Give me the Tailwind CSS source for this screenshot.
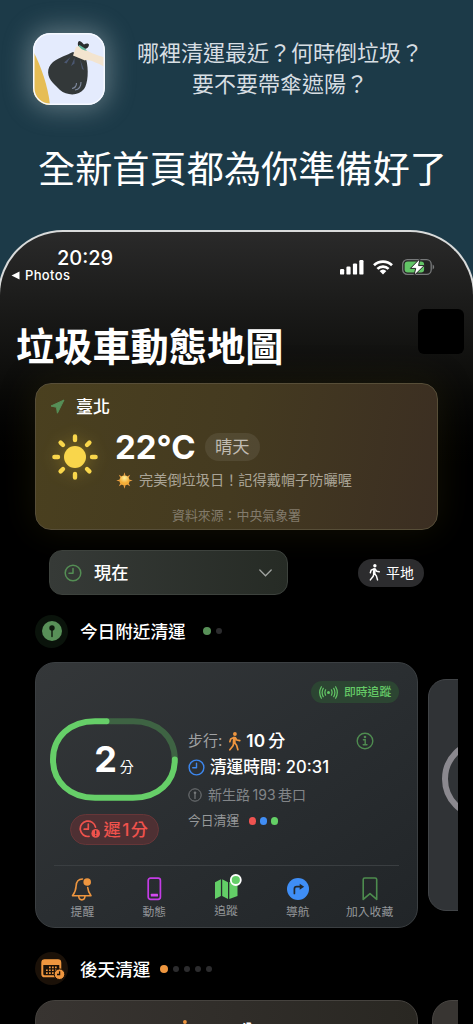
<!DOCTYPE html>
<html lang="zh-Hant">
<head>
<meta charset="utf-8">
<title>垃圾車動態地圖</title>
<script src="https://cdn.jsdelivr.net/npm/@tailwindcss/browser@4"></script>
</head>
<body class="bg-black">
<svg class="hidden">
  <symbol id="walk" viewBox="0 0 12 18"><circle cx="6.4" cy="1.9" r="1.8" fill="currentColor"/><g fill="none" stroke="currentColor" stroke-linecap="round" stroke-linejoin="round"><path stroke-width="2.8" d="M6 5.8 5.6 10"/><path stroke-width="1.6" d="M5.4 5.2 2.4 6.6 1.6 9.2M6.8 5.4 8.2 7.6 11 8.2M5.4 10.2 4.6 13 1.6 16.8M6 10 8 12.6 9.2 16.8"/></g></symbol>
  <symbol id="clock" viewBox="0 0 18 18"><g fill="none" stroke="currentColor" stroke-width="1.5" stroke-linecap="round" stroke-linejoin="round"><circle cx="9" cy="9" r="7.8"/><path d="M9 4.4V9.2H5"/></g></symbol>
</svg>
<main class="relative flex h-[1024px] w-[473px] flex-col overflow-hidden bg-[#1c3a48] font-['Inter','Noto_Sans_CJK_TC',sans-serif] text-white">
  <header class="h-[230px] shrink-0">
    <div class="flex h-[124px] items-start pl-[33px] pt-[33px]">
      <div class="size-[72px] shrink-0 overflow-hidden rounded-[17px] shadow-[0_0_26px_4px_rgba(225,235,235,0.34)]">
        <svg viewBox="0 0 72 72" class="size-full">
          <rect width="72" height="72" fill="#e4ebfd"/>
          <path d="M0 18C8 33 15 53 17 72H0Z" fill="#e6bd55"/>
          <path d="M46 15C44 11 45 8 46.5 8 49 8.500 50 11 51 11.500 53 10 56 10 56 12 55.500 15 53 16.500 50 16Z" fill="#292d2f"/>
          <path d="M40 19C34 22 27 24 20 29 13 35 14 44 20 50L27 57C34 63 46 63 51 56 55 51 56 36 53 26Z" fill="#333839"/>
          <path d="M37.500 24 31 29.500 33.500 30.500ZM41.500 25 38 33 41.500 30.500ZM47 26 49 36 51 37Z" fill="#4b5771"/>
          <path d="M43 14 46 13C54 18.500 63 22 72 24.500V34C62 29 55 26 52 27.500L40 22.500Z" fill="#f3e4cf"/>
          <path d="M45.500 12.500C47 15.500 50 17.500 54 17.800L52 15.500 46.500 12Z" fill="#5eb49a"/>
          <path d="M43.500 50C43.500 53 42 55 39 55.500M48 49C48 54 46 56.500 42 57" fill="none" stroke="#7d879b" stroke-width="1.2"/>
          <rect x=".75" y=".75" width="70.5" height="70.5" rx="16.3" fill="none" stroke="#f6f9ff" stroke-width="1.5"/>
        </svg>
      </div>
      <p class="ml-[25px] mt-[5px] w-[300px] text-center text-[22px] leading-[31px] text-[#d7dee3]">哪裡清運最近？何時倒垃圾？<br>要不要帶傘遮陽？</p>
    </div>
    <h1 class="pl-[12px] pt-[20px] text-center text-[37.2px] leading-[52px] whitespace-nowrap">全新首頁都為你準備好了</h1>
  </header>

  <section class="-mx-[2px] flex-1 rounded-t-[65px] border-2 border-b-0 border-[#d9dbdb] bg-black bg-linear-to-b from-[#2a2a2a] via-[#0d0d0b] via-[145px] to-black to-[300px]">
    <!-- status bar -->
    <div class="flex h-[56px] items-start justify-between pl-[11px] pr-[38px]">
      <div class="pt-[15px]">
        <div class="pl-[46px] text-[20px] leading-[22px] font-medium">20:29</div>
        <div class="flex items-center gap-[5px] text-[13px] leading-[13px] font-medium tracking-[0.35px]"><svg class="h-[9px] w-[9px]" viewBox="0 0 9 9"><path d="M.5 4.5 8.5.5V8.5Z" fill="#fff"/></svg>Photos</div>
      </div>
      <div class="flex h-[43px] items-center gap-[9px] pt-[27px]">
        <svg class="h-[15px] w-[24px]" viewBox="0 0 24 15" fill="#fff"><rect y="9" width="4.2" height="5.6" rx="1.2"/><rect x="6.4" y="6.5" width="4.2" height="8.1" rx="1.2"/><rect x="12.9" y="3.4" width="4.2" height="11.2" rx="1.2"/><rect x="19.3" width="4.2" height="14.6" rx="1.2"/></svg>
        <svg class="h-[15px] w-[20px]" viewBox="0 0 20 15"><g fill="none" stroke="#fff" stroke-width="2.7"><path d="M1 5.2A13 13 0 0 1 19 5.2M4.4 8.9A8 8 0 0 1 15.6 8.9"/></g><path d="M6.6 11.1A5 5 0 0 1 13.4 11.1L10 14.6Z" fill="#fff"/></svg>
        <svg class="h-[18px] w-[33px]" viewBox="0 0 33 18"><rect x=".7" y="1.7" width="28.5" height="14.6" rx="4.6" fill="none" stroke="#77797a" stroke-width="1.3"/><path d="M30.6 6.5C32.7 7.4 32.7 10.6 30.6 11.5Z" fill="#77797a"/><rect x="2.6" y="3.6" width="19.5" height="10.8" rx="3" fill="#62c466"/><path d="M18 .6 8.400 10.400H13.700L12 17.600 22.200 7.600H16.600Z" fill="#fff" stroke="#242424" stroke-width="1"/></svg>
      </div>
    </div>
    <div class="flex h-[95px] justify-between pl-[16px] pr-[9.5px] pt-[20.5px]">
      <h2 class="pt-[1px] text-[38.2px] leading-[74px] font-bold whitespace-nowrap">垃圾車動態地圖</h2>
      <div class="size-[45.5px] rounded-[6px] bg-black"></div>
    </div>

    <!-- weather -->
    <article class="ml-[35px] h-[147px] w-[403px] rounded-[16px] border border-[#574e38] bg-linear-100 from-[#4a401f] via-[#443a20] via-50% to-[#3b2e22] shadow-[0_0_36px_rgba(70,60,10,0.28)]">
      <div class="flex items-center gap-[11px] pl-[14px] pt-[10px]">
        <svg class="size-[15px]" viewBox="0 0 15 15"><path d="M14 1 7.4 14.2 6.5 8.3 1 7Z" fill="#568f57" stroke="#568f57" stroke-linejoin="round"/></svg>
        <span class="pt-[2px] text-[17px] leading-[22px] font-medium">臺北</span>
      </div>
      <div class="flex pl-[15px] pt-[12px]">
        <svg class="mt-[3px] size-[48px] shrink-0 drop-shadow-[0_0_7px_rgba(255,215,50,0.3)]" viewBox="-24 -24 48 48"><circle r="11" fill="#f9d64b"/><g stroke="#f9d64b" stroke-width="4.4" stroke-linecap="round"><path d="M0-20.6V-17M0 20.6V17M-20.6 0H-17M20.6 0H17M-14.4-14.4-12-12M14.4 14.4 12 12M-14.4 14.4-12 12M14.4-14.4 12-12"/></g></svg>
        <div class="pl-[16px]">
          <div class="flex items-center gap-[10px]">
            <span class="w-[80px] text-[33px] leading-[34px] font-bold whitespace-nowrap">22°C</span>
            <span class="h-[28px] rounded-full bg-white/8 px-[10px] text-[17.3px] leading-[27px] text-[#c0bbb1]">晴天</span>
          </div>
          <div class="flex items-center gap-[6px] pt-[5px] pl-[1px]">
            <svg class="size-[17px]" viewBox="-9 -9 18 18"><defs><radialGradient id="sg" cy=".25"><stop stop-color="#fff09a"/><stop offset="1" stop-color="#f5ae37"/></radialGradient></defs><path d="M0-8.7 1.1-5H-1.1ZM0 8.7 1.1 5H-1.1ZM-8.7 0-5 1.1V-1.1ZM8.7 0 5 1.1V-1.1ZM-6-6-2.7-4.3-4.3-2.7ZM6 6 2.7 4.3 4.3 2.7ZM-6 6-2.7 4.3-4.3 2.7ZM6-6 2.7-4.3 4.3-2.7Z" fill="#f0a044"/><circle r="5.4" fill="url(#sg)"/></svg>
            <span class="text-[14.2px] leading-[22px] whitespace-nowrap text-[#aaa496]">完美倒垃圾日！記得戴帽子防曬喔</span>
          </div>
        </div>
      </div>
      <p class="pt-[16px] text-center text-[12.9px] leading-[18px] text-[#827b6c]">資料來源：中央氣象署</p>
    </article>

    <!-- time filter -->
    <div class="flex items-center justify-between pl-[49px] pr-[49px] pt-[20px]">
      <div class="flex h-[45px] w-[239px] items-center rounded-[13px] border border-[#3d423d] bg-linear-to-r from-[#363a37] to-[#262b25] pr-[15px] pl-[14px]">
        <svg class="size-[18px] text-[#548e54]"><use href="#clock"/></svg>
        <span class="ml-[12px] flex-1 text-[17.3px] leading-[24px] font-medium">現在</span>
        <svg class="h-[8px] w-[13px]" viewBox="0 0 13 8"><path d="M.8 1 6.5 6.8 12.2 1" fill="none" stroke="#a1a4a1" stroke-width="1.3" stroke-linecap="round"/></svg>
      </div>
      <div class="flex h-[28px] w-[66px] items-center gap-[5px] rounded-full bg-[#2c2c2e] pl-[10px] text-[14px]"><svg class="h-[17px] w-[13px]"><use href="#walk"/></svg>平地</div>
    </div>

    <div class="flex h-[67px] items-center pl-[35px] pt-[5px]">
      <div class="flex size-[33px] items-center justify-center rounded-full bg-[#0a130b]"><svg class="size-[20px]" viewBox="0 0 20 20"><circle cx="10" cy="10" r="10" fill="#589058"/><circle cx="10" cy="7" r="2.7" fill="#0d180d"/><path d="M10 8V15.5" stroke="#0d180d" stroke-width="1.4" stroke-linecap="round"/></svg></div>
      <h3 class="ml-[12px] pt-[1px] text-[17.6px] leading-[25px] font-medium">今日附近清運</h3>
      <i class="ml-[17.5px] size-[8px] rounded-full bg-[#589058]"></i><i class="ml-[5px] size-[6px] rounded-full bg-[#2c2c2e]"></i>
    </div>

    <!-- nearby stop cards -->
    <div class="flex w-[457.5px] items-center gap-[9.5px] overflow-hidden pl-[35px]">
      <article class="h-[266px] w-[383px] shrink-0 rounded-[20px] border border-[#3b3f42] bg-linear-to-br from-[#343739] via-[#2a2e31] to-[#212528]">
        <div class="flex justify-end pr-[18px] pt-[18px]"><div class="flex h-[22px] w-[88px] items-center gap-[6px] rounded-full bg-[#2c4532] pl-[8px] text-[11.8px] font-medium text-[#64c866]">
          <svg class="h-[13px] w-[19px]" viewBox="0 0 19 13"><circle cx="9.5" cy="6.5" r="1.5" fill="currentColor"/><g fill="none" stroke="currentColor" stroke-width="1.2" stroke-linecap="round"><path d="M6.6 3.8Q5.2 6.5 6.6 9.2M12.4 3.8Q13.8 6.5 12.4 9.2M4.3 2.3Q1.9 6.5 4.3 10.7M14.7 2.3Q17.1 6.5 14.7 10.7M2.4.8Q-1 6.5 2.4 12.2M16.6.8Q20 6.5 16.6 12.2"/></g></svg><span class="pt-[2px] whitespace-nowrap">即時追蹤</span></div></div>
        <div class="flex h-[162px] pl-[14px] pt-[15px]">
          <div class="flex w-[128px] flex-col items-center">
            <div class="grid h-[83px] w-[128px] place-items-center">
              <svg class="col-start-1 row-start-1 h-[83px] w-[128px]" viewBox="0 0 128 83" fill="none" stroke-width="6" stroke-linecap="round"><path d="M56 3.200H83C108 3.200 124.800 19 124.800 41.500" stroke="#3e6343" stroke-linecap="butt"/><path d="M56.500 3.200H45C20 3.200 3 19 3 41.500S20 79.800 45 79.800H83C108 79.800 124.800 64 124.800 41.500" stroke="#66cf68"/></svg>
              <div class="col-start-1 row-start-1 flex items-baseline gap-[3px] pb-[1px]"><span class="text-[36px] leading-[44px] font-bold">2</span><span class="text-[14px] leading-[20px]">分</span></div>
            </div>
            <div class="mt-[13px] flex h-[31px] w-[89px] items-center gap-[3px] rounded-full border border-[#663638] bg-[#4e3033] pl-[8px] text-[17.2px] text-[#f0524c]">
              <svg class="h-[19px] w-[22px] shrink-0" viewBox="0 0 22 19" fill="none" stroke="currentColor" stroke-width="1.7" stroke-linecap="round" stroke-linejoin="round"><path d="M10 16.4A7.7 7.7 0 1 1 16.5 7.2M9.3 4.2V9.2H5.2"/><circle cx="16.7" cy="13.4" r="4.3" fill="currentColor" stroke="none"/><path d="M16.7 11V13.6M16.7 15.5V15.6" stroke="#4e3033" stroke-width="1.4"/></svg><span class="pt-[1px] font-medium whitespace-nowrap">遲<span class="px-[1.5px]">1</span>分</span></div>
          </div>
          <div class="flex-1 pl-[10px] pt-[10px] whitespace-nowrap">
            <div class="flex h-[26px] items-center text-[15px] text-[#a0a2a4]">步行:<svg class="ml-[6px] h-[19px] w-[13px] text-[#ee953f]"><use href="#walk"/></svg><b class="ml-[5px] text-[17.3px] font-semibold text-white">10<span class="ml-[3px] font-medium">分</span></b>
              <svg class="mr-[43px] ml-auto size-[18px]" viewBox="0 0 18 18" fill="none" stroke="#4f8c50" stroke-width="1.4" stroke-linecap="round"><circle cx="9" cy="9" r="7.8"/><path d="M7.4 7.7H9.2V12.6M7.2 12.7H11"/><circle cx="9" cy="5" r=".6" fill="#4f8c50"/></svg></div>
            <div class="flex h-[26px] items-center text-[16.6px] font-medium"><svg class="mr-[5px] size-[17px] text-[#3d87ee]"><use href="#clock"/></svg>清運時間: 20:31</div>
            <div class="flex h-[29px] items-center text-[14px] text-[#828588]"><svg class="mr-[6px] size-[14px]" viewBox="0 0 14 14" fill="none" stroke="#75787a"><circle cx="7" cy="7" r="6.2"/><path d="M7 5.5V10.5" stroke-linecap="round" stroke-width="1.2"/><circle cx="7" cy="4.8" r="1.3" fill="#75787a" stroke="none"/></svg>新生路<span class="px-[2.5px]">193</span>巷口</div>
            <div class="flex h-[24px] items-center gap-[3.5px] text-[12.8px] text-[#96989a]"><span class="mr-[6px]">今日清運</span><i class="size-[7.5px] rounded-full bg-[#ef5350]"></i><i class="size-[7.5px] rounded-full bg-[#418ef5]"></i><i class="size-[7.5px] rounded-full bg-[#64d066]"></i></div>
          </div>
        </div>
        <div class="mx-[18px] border-t border-[#3a3e41]"></div>
        <nav class="ml-[10.5px] grid w-[359px] grid-cols-5 justify-items-center pt-[11px] text-[11.8px] leading-[18px] text-[#94979a]">
          <div class="flex flex-col items-center gap-[2px]"><svg class="h-[24px] w-[22px]" viewBox="0 0 22 24" fill="none" stroke="#ed953f" stroke-width="1.6" stroke-linejoin="round" stroke-linecap="round"><path d="M11.5 2C7 2 5.3 5.2 5.1 9 4.9 13.5 4 15.5 1.5 18.7H20C17.6 15.5 16.9 13.6 16.7 10.5M7.7 19.3C8 24 13.7 24 14 19.3"/><circle cx="16.2" cy="5" r="3.8" fill="#ed953f" stroke="none"/></svg>提醒</div>
          <div class="flex flex-col items-center gap-[2px]"><svg class="h-[24px] w-[15px]" viewBox="0 0 15 24"><rect x="1.2" y="1.2" width="12.2" height="21.2" rx="2.3" fill="none" stroke="#c43ce6" stroke-width="1.7"/><rect x="3.8" y="16.7" width="7.2" height="2.8" rx=".5" fill="#d349ef"/></svg>動態</div>
          <div class="-mt-[3px] flex flex-col items-center gap-[3px]"><svg class="-mr-[4px] h-[25px] w-[28px]" viewBox="0 0 28 25"><path d="M1 8.200 6.900 5.200V22L1 25ZM8.200 5.200 14 8.200V25L8.200 22ZM15.300 8.200 18 6.500 23.500 10V22L15.300 25Z" fill="#63ce67"/><circle cx="21.8" cy="6" r="5" fill="#63ce67" stroke="#fff" stroke-width="1.8"/></svg>追蹤</div>
          <div class="flex flex-col items-center gap-[2px]"><svg class="h-[24px] w-[22px]" viewBox="0 0 22 24"><circle cx="11" cy="12" r="11" fill="#3f8ef6"/><path d="M7.4 16.5V12Q7.4 9.7 9.7 9.7H14" fill="none" stroke="#23282c" stroke-width="1.7" stroke-linecap="round"/><path d="M12.7 6.7 17.2 9.7 12.7 12.7Z" fill="#23282c"/></svg>導航</div>
          <div class="flex flex-col items-center gap-[2px]"><svg class="h-[24px] w-[16px]" viewBox="0 0 16 24"><path d="M1.2 22.4V2.6Q1.2 1 2.8 1H13.1Q14.7 1 14.7 2.6V22.4L8 16.6Z" fill="none" stroke="#4d8c4e" stroke-width="1.6" stroke-linejoin="round"/></svg>加入收藏</div>
        </nav>
      </article>
      <article class="flex h-[232px] w-[345px] shrink-0 items-start rounded-[18px] border border-[#414447] bg-[#303336] pt-[59px] pl-[13px]">
        <div class="h-[80px] w-[120px] rounded-full border-[6px] border-[#8b898f]"></div>
      </article>
    </div>

    <div class="flex h-[72px] items-center pl-[35px] pt-[9px]">
      <div class="flex size-[33px] items-center justify-center rounded-full bg-[#1b1108] pl-[3px] pt-[1px]">
        <svg class="h-[21px] w-[24px]" viewBox="0 0 24 21"><rect x="1.3" y="1.3" width="18" height="16" rx="2.4" fill="#1b1108" stroke="#ee963f" stroke-width="2"/><path d="M1 6V3.2Q1 .8 3.5.8H17Q19.6.8 19.6 3.2V6Z" fill="#ee963f"/><g fill="#ee963f"><path d="M8 7.6h1.7v1.7H8zM11 7.6h1.7v1.7H11zM14 7.6h1.7v1.7H14zM5 10.4h1.7v1.7H5zM8 10.4h1.7v1.7H8zM11 10.4h1.7v1.7H11zM14 10.4h1.7v1.7H14zM5 13.2h1.7v1.7H5zM8 13.2h1.7v1.7H8zM11 13.2h1.7v1.7H11z"/><circle cx="18.5" cy="15.2" r="5.3" stroke="#1b1108" stroke-width="1"/></g><path d="M18.6 12.3V15.5H16" fill="none" stroke="#1b1108" stroke-width="1.3"/></svg></div>
      <h3 class="ml-[12px] pt-[1px] text-[17.6px] leading-[25px] font-medium">後天清運</h3>
      <div class="flex items-center gap-[5px] pl-[10px]"><i class="size-[8px] rounded-full bg-[#ee963f]"></i><i class="size-[6px] rounded-full bg-[#2c2c2e]"></i><i class="size-[6px] rounded-full bg-[#2c2c2e]"></i><i class="size-[6px] rounded-full bg-[#2c2c2e]"></i><i class="size-[6px] rounded-full bg-[#2c2c2e]"></i></div>
    </div>
    <div class="flex h-[24px] w-[457.5px] gap-[14px] overflow-hidden pl-[35px]">
      <article class="flex h-[250px] w-[383px] shrink-0 items-start rounded-[20px] border border-[#45423e] bg-linear-to-r from-[#383431] to-[#292722] pt-[19px] pl-[142px]"><svg class="h-[19px] w-[13px] text-[#ee953f]"><use href="#walk"/></svg><span class="ml-[27px] text-[17.3px] leading-[21px] font-semibold">10<span class="ml-[2px] font-medium">分</span></span></article>
      <article class="h-[250px] w-[345px] shrink-0 rounded-[20px] border border-[#484542] bg-[#383532]"></article>
    </div>
  </section>
</main>
</body>
</html>
